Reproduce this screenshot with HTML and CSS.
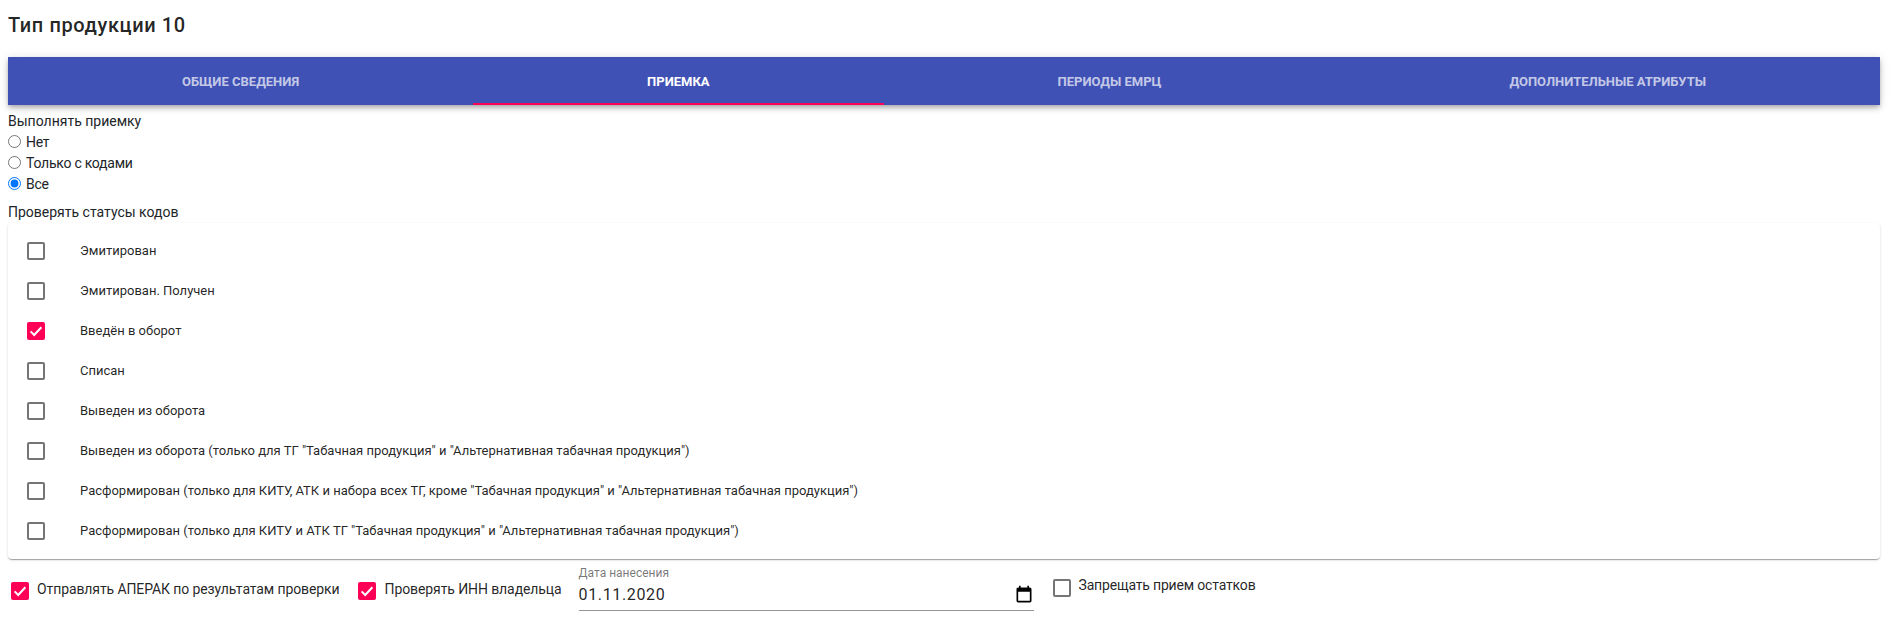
FILE: index.html
```html
<!DOCTYPE html>
<html lang="ru">
<head>
<meta charset="utf-8">
<title>Тип продукции 10</title>
<link rel="stylesheet" href="styles.css">
</head>
<body>
<h1 class="title">Тип продукции 10</h1>
<nav class="tabs">
  <a class="tab">Общие сведения</a>
  <a class="tab tab-active">Приемка</a>
  <a class="tab">Периоды ЕМРЦ</a>
  <a class="tab">Дополнительные атрибуты</a>
</nav>
<section class="accept">
  <div class="field-label">Выполнять приемку</div>
  <label class="radio-row"><input class="radio" type="radio" name="accept">Нет</label>
  <label class="radio-row"><input class="radio" type="radio" name="accept">Только с кодами</label>
  <label class="radio-row"><input class="radio" type="radio" name="accept" checked>Все</label>
  <div class="field-label status-label">Проверять статусы кодов</div>
</section>
<section class="card">
  <div class="row"><span class="box"></span><span class="row-text">Эмитирован</span></div>
  <div class="row"><span class="box"></span><span class="row-text">Эмитирован. Получен</span></div>
  <div class="row"><span class="box box-on"><svg viewBox="0 0 18 18"><path d="M3.6 9.4 7.2 13 14.4 5.2"/></svg></span><span class="row-text">Введён в оборот</span></div>
  <div class="row"><span class="box"></span><span class="row-text">Списан</span></div>
  <div class="row"><span class="box"></span><span class="row-text">Выведен из оборота</span></div>
  <div class="row"><span class="box"></span><span class="row-text">Выведен из оборота (только для ТГ "Табачная продукция" и "Альтернативная табачная продукция")</span></div>
  <div class="row"><span class="box"></span><span class="row-text">Расформирован (только для КИТУ, АТК и набора всех ТГ, кроме "Табачная продукция" и "Альтернативная табачная продукция")</span></div>
  <div class="row"><span class="box"></span><span class="row-text">Расформирован (только для КИТУ и АТК ТГ "Табачная продукция" и "Альтернативная табачная продукция")</span></div>
</section>
<section class="bottom">
  <div class="check check-1"><span class="box box-on"><svg viewBox="0 0 18 18"><path d="M3.6 9.4 7.2 13 14.4 5.2"/></svg></span><span class="check-text">Отправлять АПЕРАК по результатам проверки</span></div>
  <div class="check check-2"><span class="box box-on"><svg viewBox="0 0 18 18"><path d="M3.6 9.4 7.2 13 14.4 5.2"/></svg></span><span class="check-text">Проверять ИНН владельца</span></div>
  <div class="date">
    <div class="date-label">Дата нанесения</div>
    <div class="date-value"><span>01.11.2020</span>
      <svg class="cal" viewBox="0 0 24 24"><path d="M19 3h-1V1h-2v2H8V1H6v2H5c-1.1 0-2 .9-2 2v14c0 1.1.9 2 2 2h14c1.1 0 2-.9 2-2V5c0-1.1-.9-2-2-2zm0 16H5V8h14v11z"/></svg>
    </div>
  </div>
  <div class="check check-3"><span class="box"></span><span class="check-text">Запрещать прием остатков</span></div>
</section>
</body>
</html>
```
FILE: styles.css
```css
* { box-sizing: border-box; }
html, body { height: 100%; }
body {
  margin: 0;
  padding: 0 23px 0 8px;
  background: #fff;
  color: #212529;
  font-family: Roboto, "Noto Sans", sans-serif;
  font-size: 14px;
  line-height: 21px;
  overflow: hidden;
}
.title {
  margin: 0;
  padding-top: 11px;
  height: 57px;
  font-size: 20px;
  line-height: 28px;
  font-weight: 500;
  letter-spacing: .6px;
  color: rgba(0, 0, 0, .87);
}
.tabs {
  display: flex;
  height: 48px;
  background: #3f51b5;
  box-shadow: 0 2px 4px -1px rgba(0,0,0,.2), 0 4px 5px 0 rgba(0,0,0,.14), 0 1px 10px 0 rgba(0,0,0,.12);
}
.tab {
  flex: 1 1 auto;
  display: flex;
  align-items: center;
  justify-content: center;
  color: rgba(255, 255, 255, .7);
  font-size: 13px;
  font-weight: 700;
  text-transform: uppercase;
}
.tab-active {
  color: #fff;
  border-bottom: 2px solid #ff0057;
  padding-top: 2px;
}
.accept { padding-top: 6px; }
.field-label { height: 21px; }
.radio-row {
  display: flex;
  align-items: center;
  height: 21px;
  letter-spacing: -.25px;
}
.radio {
  width: 13px;
  height: 13px;
  margin: 0 5px 2px 0;
}
.status-label { margin-top: 7px; }
.card {
  padding: 8px 0;
  background: #fff;
  border-radius: 4px;
  box-shadow: 0 2px 1px -1px rgba(0,0,0,.2), 0 1px 1px 0 rgba(0,0,0,.14), 0 1px 3px 0 rgba(0,0,0,.12);
}
.row {
  display: flex;
  align-items: center;
  height: 40px;
  padding-left: 19px;
  font-size: 13px;
  color: rgba(0, 0, 0, .87);
}
.row-text { margin: 0 0 2px 35px; }
.box {
  flex: none;
  display: block;
  width: 18px;
  height: 18px;
  border: 2px solid rgba(0, 0, 0, .54);
  border-radius: 2px;
}
.box-on {
  background: #ff0057;
  border: 0;
}
.box svg { display: block; width: 18px; height: 18px; }
.box svg path { fill: none; stroke: #fff; stroke-width: 2; }
.bottom {
  display: flex;
  align-items: flex-start;
  height: 64px;
}
.check {
  display: flex;
  align-items: flex-start;
  gap: 8px;
  color: rgba(0, 0, 0, .87);
}
.check-text { letter-spacing: -.1px; margin-top: -3px; }
.check-1 { margin: 23px 0 0 3px; }
.check-2 { margin: 23px 0 0 18px; gap: 9px; }
.check-3 { margin: 20px 0 0 19px; }
.check-3 .check-text { margin-top: -4px; letter-spacing: -.17px; }
.date {
  width: 455px;
  margin: 6px 0 0 17px;
  height: 46px;
  border-bottom: 1px solid rgba(0, 0, 0, .42);
}
.date-label {
  font-size: 12px;
  line-height: 16px;
  color: rgba(0, 0, 0, .54);
}
.date-value {
  display: flex;
  align-items: center;
  justify-content: space-between;
  font-size: 16px;
  line-height: 22px;
  letter-spacing: .65px;
  color: rgba(0, 0, 0, .87);
  margin-top: 3px;
}
.cal { width: 20px; height: 20px; flex: none; }
```
